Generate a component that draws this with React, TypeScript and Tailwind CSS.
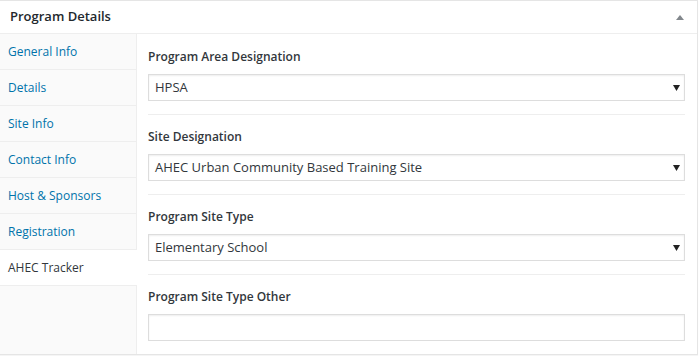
import React from "react";

const tabs = ["General Info", "Details", "Site Info", "Contact Info", "Host & Sponsors", "Registration", "AHEC Tracker"]

const fields = [
  { label: "Program Area Designation", value: "HPSA", select: true },
  { label: "Site Designation", value: "AHEC Urban Community Based Training Site", select: true },
  { label: "Program Site Type", value: "Elementary School", select: true },
  { label: "Program Site Type Other", value: "", select: false },
]

function Field({ label, value, select, first }: { label: string; value: string; select: boolean; first: boolean }) {
  return (
    <div className={`pb-[13px] ${first ? "pt-[13px]" : "pt-3 border-t border-[#eee]"}`}>
      <div className="text-[12px] leading-5 font-semibold text-[#32373c] mb-[7px]">{label}</div>
      <div className="h-[27px] flex items-center border border-[#ddd] bg-white shadow-[inset_0_1px_2px_rgba(0,0,0,0.07)] pl-[6px] pr-[4px]">
        <span className="flex-1 text-[13px] text-[#32373c]">{value}</span>
        {select && (
          <svg width="7" height="6" viewBox="0 0 7 6">
            <polygon points="0,0 7,0 3.5,6" fill="#222" />
          </svg>
        )}
      </div>
    </div>
  )
}

export default function App() {
  return (
    <div className="w-[700px] h-[356px] bg-white" style={{ fontFamily: '"Open Sans", "Liberation Sans", sans-serif' }}>
      <div className="w-[698px] border-t border-r border-b border-[#e5e5e5] bg-white shadow-[0_1px_1px_rgba(0,0,0,0.04)]">
        <div className="h-[33px] flex items-center justify-between border-b border-[#eee] pl-[10px] pr-[13px]">
          <span className="text-[13px] font-semibold text-[#23282d]">Program Details</span>
          <svg width="8" height="5" viewBox="0 0 8 5">
            <polygon points="4,0 8,5 0,5" fill="#82878c" />
          </svg>
        </div>
        <div className="flex">
          <div className="w-[137px] bg-[#fafafa] border-r border-[#eee]">
            {tabs.map((t, i) => {
              const active = t === "AHEC Tracker"
              return (
                <div
                  key={i}
                  className={`h-[36px] flex items-center pl-2 border-b border-[#eee] text-[12px] ${active ? "bg-white text-[#32373c] mr-[-1px]" : "text-[#0073aa]"}`}
                >
                  {t}
                </div>
              )
            })}
          </div>
          <div className="flex-1 pl-[11px] pr-[12px]">
            {fields.map((f, i) => (
              <Field key={i} label={f.label} value={f.value} select={f.select} first={i === 0} />
            ))}
          </div>
        </div>
      </div>
    </div>
  )
}
